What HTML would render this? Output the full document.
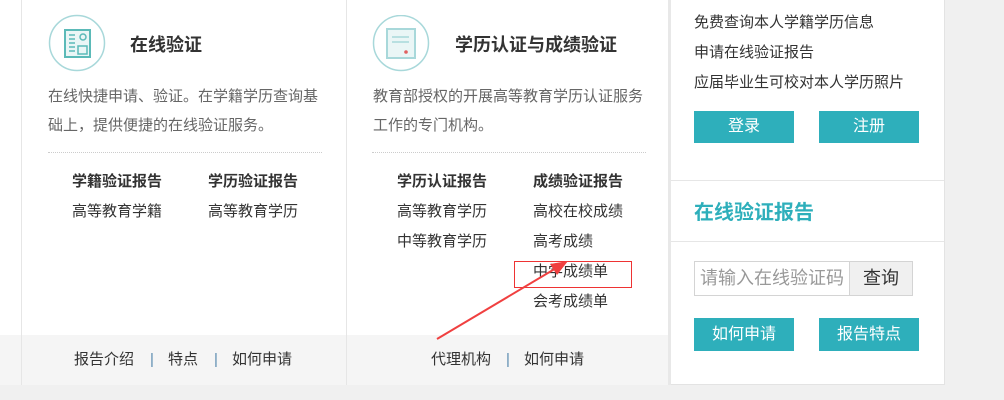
<!DOCTYPE html>
<html><head><meta charset="utf-8"><style>
body{margin:0;width:1004px;height:400px;background:#f0f0f0;position:relative;overflow:hidden;font-family:"Liberation Sans","Noto Sans CJK SC",sans-serif;color:#333;font-size:15px}
.a{position:absolute;white-space:nowrap}
.t{line-height:20px}
.b{font-weight:bold}
.s{color:#5a8ab0}
.btn{position:absolute;background:#2eafbb;color:#fff;width:100px;height:32px;line-height:32px;text-align:center;font-size:16px}
</style></head><body>
<div class="a" style="left:0;top:0;width:670px;height:385px;background:#fff"></div>
<div class="a" style="left:0;top:335px;width:670px;height:50px;background:#f5f5f5"></div>
<div class="a" style="left:21px;top:0;width:1px;height:385px;background:#e6e6e6"></div>
<div class="a" style="left:346px;top:0;width:1px;height:385px;background:#e6e6e6"></div>
<div class="a" style="left:668px;top:0;width:3px;height:385px;background:#e8e8e8"></div>
<div class="a" style="left:671px;top:0;width:273px;height:384px;background:#fff;border-right:1px solid #e3e3e3;border-bottom:1px solid #e3e3e3"></div>
<div class="a" style="left:671px;top:180px;width:273px;height:1px;background:#e6e6e6"></div>
<div class="a" style="left:671px;top:241px;width:273px;height:1px;background:#e6e6e6"></div>

<svg class="a" style="left:47px;top:13px" width="60" height="60"><circle cx="30" cy="30" r="27.5" fill="none" stroke="#a8d8da" stroke-width="1.5"/><rect x="18" y="17" width="25" height="27" fill="#eaf6f6" stroke="#5bbab8" stroke-width="2"/><g stroke="#5bbab8" stroke-width="1.5"><line x1="22" y1="22" x2="28" y2="22"/><line x1="22" y1="26" x2="28" y2="26"/><line x1="22" y1="30" x2="28" y2="30"/><line x1="22" y1="34" x2="28" y2="34"/><line x1="22" y1="38" x2="28" y2="38"/></g><circle cx="36" cy="24" r="3" fill="none" stroke="#5bbab8" stroke-width="1.5"/><rect x="31" y="33" width="9" height="8" fill="none" stroke="#5bbab8" stroke-width="1.5"/></svg>
<div class="a b" style="left:130px;top:34px;font-size:18px;line-height:22px">在线验证</div>
<div class="a t" style="left:48px;top:87px;color:#666">在线快捷申请、验证。在学籍学历查询基</div>
<div class="a t" style="left:48px;top:116px;color:#666">础上，提供便捷的在线验证服务。</div>
<div class="a" style="left:48px;top:152px;width:274px;border-top:1px dotted #ccc"></div>
<div class="a t b" style="left:72px;top:172px">学籍验证报告</div>
<div class="a t b" style="left:208px;top:172px">学历验证报告</div>
<div class="a t" style="left:72px;top:202px">高等教育学籍</div>
<div class="a t" style="left:208px;top:202px">高等教育学历</div>

<svg class="a" style="left:372px;top:15px" width="58" height="58"><circle cx="29" cy="28" r="27.5" fill="none" stroke="#a8d8da" stroke-width="1.5"/><rect x="15" y="14" width="28" height="29" fill="#eaf6f6" stroke="#a8d8da" stroke-width="2"/><line x1="20" y1="22" x2="37" y2="22" stroke="#a8d8da" stroke-width="1.5"/><line x1="20" y1="27" x2="37" y2="27" stroke="#a8d8da" stroke-width="1.5"/><circle cx="34" cy="37" r="1.8" fill="#e06060"/></svg>
<div class="a b" style="left:455px;top:34px;font-size:18px;line-height:22px">学历认证与成绩验证</div>
<div class="a t" style="left:373px;top:87px;color:#666">教育部授权的开展高等教育学历认证服务</div>
<div class="a t" style="left:373px;top:116px;color:#666">工作的专门机构。</div>
<div class="a" style="left:372px;top:152px;width:274px;border-top:1px dotted #ccc"></div>
<div class="a t b" style="left:397px;top:172px">学历认证报告</div>
<div class="a t b" style="left:533px;top:172px">成绩验证报告</div>
<div class="a t" style="left:397px;top:202px">高等教育学历</div>
<div class="a t" style="left:533px;top:202px">高校在校成绩</div>
<div class="a t" style="left:397px;top:232px">中等教育学历</div>
<div class="a t" style="left:533px;top:232px">高考成绩</div>
<div class="a t" style="left:533px;top:262px">中学成绩单</div>
<div class="a t" style="left:533px;top:292px">会考成绩单</div>
<div class="a" style="left:514px;top:261px;width:116px;height:25px;border:1px solid #e33"></div>
<svg class="a" style="left:430px;top:255px" width="150" height="90"><line x1="7" y1="84" x2="128" y2="12" stroke="#f04040" stroke-width="2"/><polygon points="138,6 120,9 127,20" fill="#f04040"/></svg>

<div class="a t" style="left:74px;top:350px">报告介绍</div>
<div class="a t s" style="left:150px;top:350px">|</div>
<div class="a t" style="left:168px;top:350px">特点</div>
<div class="a t s" style="left:214px;top:350px">|</div>
<div class="a t" style="left:232px;top:350px">如何申请</div>
<div class="a t" style="left:431px;top:350px">代理机构</div>
<div class="a t s" style="left:506px;top:350px">|</div>
<div class="a t" style="left:524px;top:350px">如何申请</div>

<div class="a t" style="left:694px;top:13px">免费查询本人学籍学历信息</div>
<div class="a t" style="left:694px;top:43px">申请在线验证报告</div>
<div class="a t" style="left:694px;top:73px">应届毕业生可校对本人学历照片</div>
<div class="btn" style="left:694px;top:111px">登录</div>
<div class="btn" style="left:819px;top:111px">注册</div>
<div class="a b" style="left:694px;top:201px;font-size:20px;line-height:24px;color:#2eafbb">在线验证报告</div>
<div class="a" style="left:694px;top:261px;height:33px;border:1px solid #d4d4d4;line-height:33px;font-size:18px;color:#999;padding-left:5px;width:149px;overflow:hidden">请输入在线验证码</div>
<div class="a" style="left:849px;top:261px;width:62px;height:33px;border:1px solid #d4d4d4;background:#f0f0f0;line-height:33px;text-align:center;font-size:18px;color:#333">查询</div>
<div class="btn" style="left:694px;top:318px;height:33px;line-height:33px">如何申请</div>
<div class="btn" style="left:819px;top:318px;height:33px;line-height:33px">报告特点</div>
</body></html>
